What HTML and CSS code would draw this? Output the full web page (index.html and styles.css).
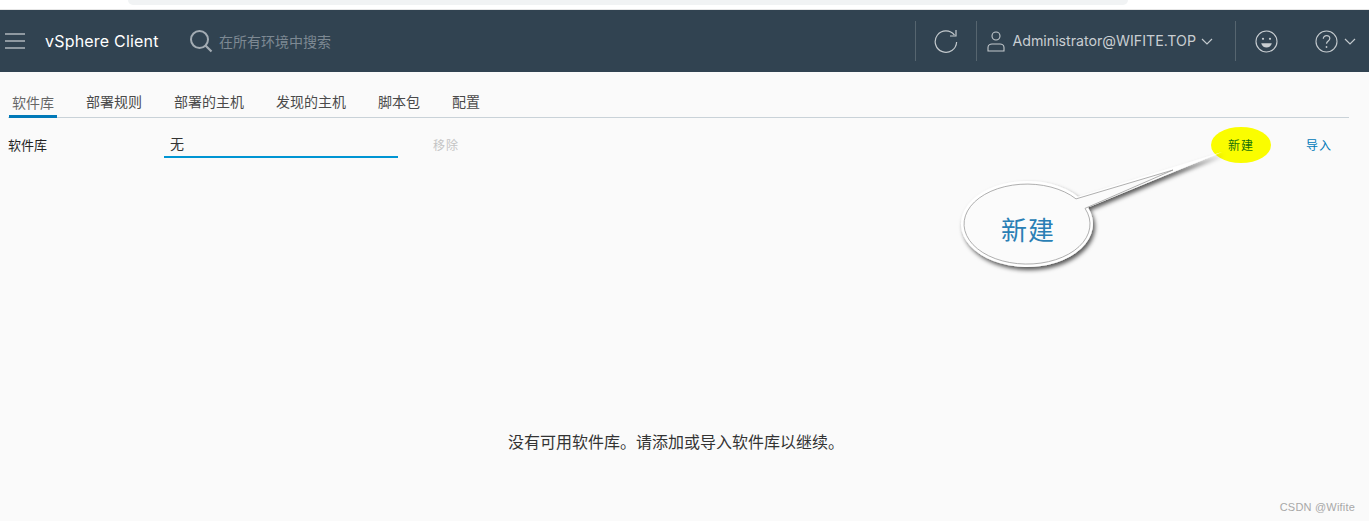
FILE: index.html
```html
<!DOCTYPE html>
<html lang="zh-CN">
<head>
<meta charset="utf-8">
<title>vSphere Client</title>
<link rel="stylesheet" href="styles.css">
</head>
<body>
<div class="chrome"><div class="chrome-pill"></div></div>
<header class="top">
  <svg class="ic-menu" width="22" height="16" viewBox="0 0 22 16"><path d="M0 1h20M0 8h20M0 15h20" stroke="#aeb6bc" stroke-width="1.3" fill="none"/></svg>
  <div class="brand">vSphere Client</div>
  <svg class="ic-search" width="23" height="23" viewBox="0 0 23 23"><circle cx="9.500" cy="9.500" r="8.500" stroke="#a3acb3" stroke-width="2" fill="none"/><path d="M15.500 15.500l6 6" stroke="#a3acb3" stroke-width="2.200" fill="none"/></svg>
  <div class="search">在所有环境中搜索</div>
  <div class="actions">
    <span class="sep"></span>
    <svg class="ic-refresh" width="24" height="24" viewBox="0 0 24 24"><path d="M20.500 6.200A10.700 10.700 0 1 0 22.600 13" stroke="#c3c9cd" stroke-width="1.200" fill="none"/><path d="M22 1v6h-6" stroke="#c3c9cd" stroke-width="1.200" fill="none"/></svg>
    <span class="sep sep-user"></span>
    <svg class="ic-user" width="18" height="21" viewBox="0 0 18 21"><circle cx="9" cy="5" r="4" stroke="#c3c9cd" stroke-width="1.100" fill="none"/><path d="M1 20v-3.500c0-2 2-3.500 4-3.500h8c2 0 4 1.500 4 3.500V20z" stroke="#c3c9cd" stroke-width="1.100" fill="none"/></svg>
    <span class="user">Administrator@WIFITE.TOP</span>
    <svg class="ic-chev" width="12" height="7" viewBox="0 0 12 7"><path d="M1 1l5 5 5-5" stroke="#c3c9cd" stroke-width="1.200" fill="none"/></svg>
    <span class="sep sep-face"></span>
    <svg class="ic-face" width="23" height="23" viewBox="0 0 23 23"><circle cx="11.500" cy="11.500" r="10.500" stroke="#c9ced2" stroke-width="1.100" fill="none"/><circle cx="8" cy="8.800" r="1.100" fill="#c9ced2"/><circle cx="15" cy="8.800" r="1.100" fill="#c9ced2"/><path d="M6.200 13.300h10.600c-.6 2.700-2.800 4.300-5.300 4.300s-4.700-1.600-5.300-4.300z" fill="#c9ced2"/></svg>
    <svg class="ic-help" width="23" height="23" viewBox="0 0 23 23"><circle cx="11.500" cy="11.500" r="10.500" stroke="#c3c9cd" stroke-width="1.100" fill="none"/><path d="M8.300 8.800c0-2 1.500-3.200 3.300-3.200s3.200 1.200 3.200 2.900c0 2.500-3.300 2.500-3.300 5.300" stroke="#c3c9cd" stroke-width="1.200" fill="none"/><circle cx="11.500" cy="17" r=".9" fill="#c3c9cd"/></svg>
    <svg class="ic-chev-help" width="12" height="7" viewBox="0 0 12 7"><path d="M1 1l5 5 5-5" stroke="#c3c9cd" stroke-width="1.200" fill="none"/></svg>
  </div>
</header>
<main class="content">
  <nav class="tabs">
    <a class="tab active">软件库</a>
    <a class="tab">部署规则</a>
    <a class="tab">部署的主机</a>
    <a class="tab">发现的主机</a>
    <a class="tab">脚本包</a>
    <a class="tab">配置</a>
  </nav>
  <div class="toolbar">
    <label class="field-label">软件库</label>
    <div class="select">无</div>
    <span class="btn disabled">移除</span>
    <span class="btn new">新建</span>
    <span class="btn import">导入</span>
  </div>
  <p class="empty">没有可用软件库。请添加或导入软件库以继续。</p>
</main>
<svg class="callout" width="300" height="110" viewBox="0 0 300 110">
  <defs><filter id="sh" x="-20%" y="-40%" width="140%" height="180%"><feDropShadow dx="2" dy="3" stdDeviation="2" flood-color="#000" flood-opacity=".65"/></filter></defs>
  <g transform="translate(0 5)">
    <path d="M117 20.700L261 -24 127 31.600A66 43 0 1 1 117 20.700z" fill="#fff" filter="url(#sh)"/>
    <path d="M115 22.900L212 -6 124 32.400A63 40 0 1 1 115 22.900z" fill="#fbfbfb" stroke="#9a9a9a" stroke-width=".8"/>
  </g>
</svg>
<span class="callout-text">新建</span>
<span class="watermark">CSDN @Wifite</span>
</body>
</html>
```
FILE: styles.css
```css
* { box-sizing: border-box; }
html, body { margin: 0; height: 100%; }
body {
  width: 1369px;
  height: 521px;
  overflow: hidden;
  position: relative;
  background: #fafafa;
  font-family: "Noto Sans CJK SC", "Noto Sans", sans-serif;
  color: #333;
}
.chrome { height: 10px; background: #fff; border-bottom: 1px solid #e6e6e6; padding-left: 128px; }
.chrome-pill { width: 1000px; height: 5px; background: #f1f3f4; border-radius: 0 0 8px 8px; }
.top {
  height: 62px;
  background: #314351;
  display: flex;
  align-items: center;
  padding-left: 5px;
}
.ic-menu { margin-top: -1px; }
.brand {
  margin-left: 18px;
  width: 145px;
  color: #fff;
  font: 16px/20px Inter, "Liberation Sans", sans-serif;
  letter-spacing: .2px;
}
.search { margin-left: 6px; font-size: 14px; color: #7d8993; }
.actions { margin-left: auto; display: flex; align-items: center; height: 40px; padding-right: 13px; }
.sep { width: 1px; height: 40px; background: #56656f; }
.ic-refresh { margin-left: 18px; }
.sep-user { margin-left: 18px; }
.ic-user { margin-left: 10px; }
.user {
  margin-left: 7px;
  color: #c9ced2;
  font: 14.200px/20px Inter, "Liberation Sans", sans-serif;
}
.ic-chev { margin-left: 5px; }
.sep-face { margin-left: 22px; }
.ic-face { margin-left: 19px; }
.ic-help { margin-left: 37px; }
.ic-chev-help { margin-left: 6px; }
.content { padding-left: 8px; }
.tabs {
  width: 1341px;
  height: 46px;
  display: flex;
  align-items: flex-end;
  border-bottom: 1px solid #c9d2d8;
  gap: 24px;
}
.tab {
  height: 31px;
  padding: 0 4px;
  font-size: 14px;
  line-height: 31px;
  color: #4a4a4a;
}
.tab.active { color: #666; border-bottom: 3px solid #0079b8; margin: 0 1px -1px 1px; width: 48px; padding: 0 0 0 3px; }
.toolbar { height: 54px; display: flex; align-items: center; }
.field-label { width: 156px; font-size: 13px; color: #222; margin-top: -2px; }
.select {
  width: 234px;
  height: 26px;
  padding-left: 6px;
  border-bottom: 2px solid #0095d3;
  font-size: 14px;
  line-height: 22px;
  color: #333;
}
.btn { font-size: 12px; letter-spacing: 1px; line-height: 18px; }
.disabled { margin-left: 35px; color: #c4c4c4; }
.new {
  margin-left: auto;
  width: 60px;
  height: 36px;
  line-height: 36px;
  text-align: center;
  border-radius: 50%;
  background: #fafd00;
  color: #16720a;
}
.import { margin-left: 35px; margin-right: 37px; color: #0079b8; }
.empty { margin: 257px 0 0; width: 1336px; text-align: center; font-size: 16px; line-height: 24px; color: #333; }
.callout { position: absolute; left: 961px; top: 171px; overflow: visible; }
.callout-text { position: absolute; left: 1001px; top: 211px; font-size: 26px; line-height: 36px; letter-spacing: 1px; color: #2a7fb5; }
.watermark { position: absolute; right: 14px; top: 500px; font: 11px/14px "Liberation Sans", sans-serif; letter-spacing: .2px; color: #a8a8a8; }
```
